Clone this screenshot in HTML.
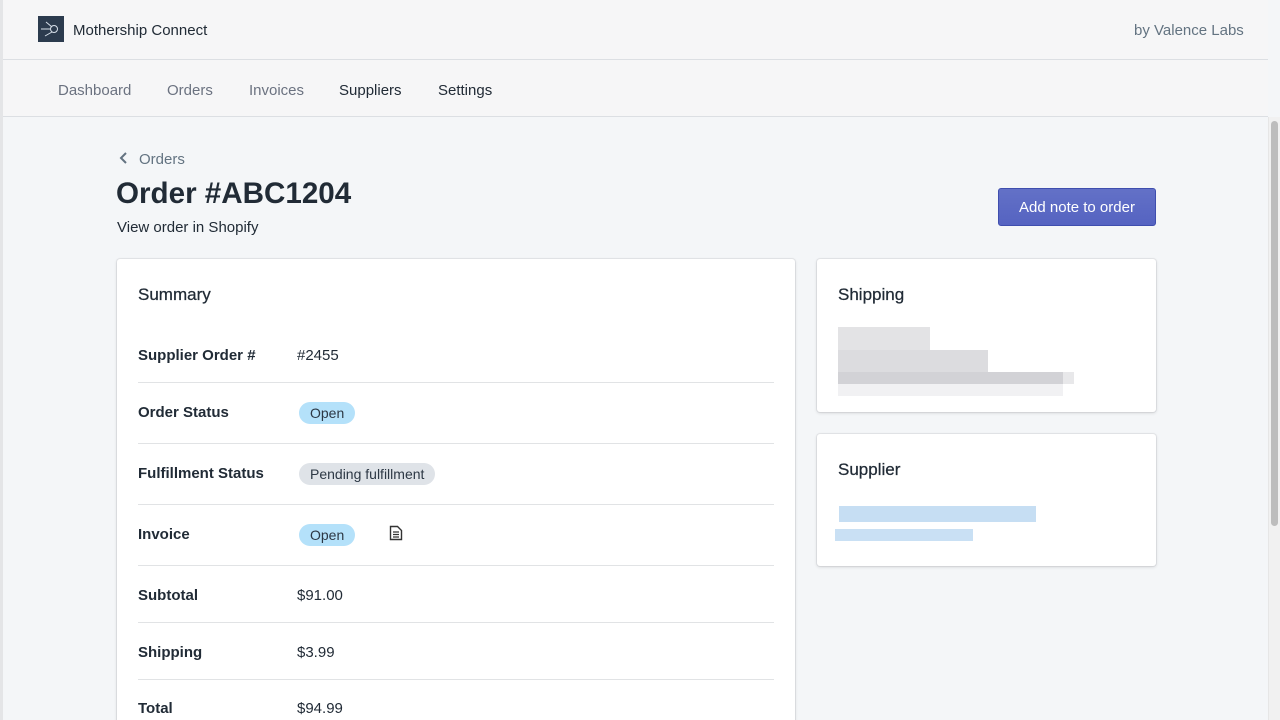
<!DOCTYPE html>
<html><head><meta charset="utf-8"><style>
*{box-sizing:border-box;margin:0;padding:0}
html{overflow:hidden;height:720px}
body{width:1280px;height:720px;overflow:hidden;background:#f4f6f8;font-family:"Liberation Sans",Arial,sans-serif;color:#212b36;position:relative}
.abs{position:absolute}
.hdr{left:3px;top:0;width:1265px;height:60px;background:#f6f6f7;border-bottom:1px solid #dcdfe3}
.nav{left:3px;top:60px;width:1265px;height:57px;background:#f6f6f7;border-bottom:1px solid #dcdfe3}
.nav span{position:absolute;top:22px;font-size:15px}
.card{background:#fff;border-radius:3px;box-shadow:0 0 0 1px rgba(63,63,68,.07),0 1px 3px rgba(63,63,68,.18)}
.lbl{position:absolute;left:21px;font-size:15px;font-weight:bold}
.ttl{position:absolute;left:21px;font-size:17px;-webkit-text-stroke:.25px #212b36}
.val{position:absolute;left:180px;font-size:15px}
.sep{position:absolute;left:21px;right:21px;height:1px;background:#e1e3e5}
.badge{position:absolute;left:182px;height:22px;border-radius:11px;padding:0 11px;font-size:14px;line-height:22px;color:#2d3845}
.px{position:absolute}
</style></head><body>
<div class="abs" style="left:0;top:0;width:3px;height:720px;background:#e4e5e7"></div>
<div class="abs hdr">
 <div class="abs" style="left:35px;top:16px;width:26px;height:26px;background:#2c3b4e">
  <svg width="26" height="26" viewBox="0 0 26 26"><g stroke="#d8e0ea" stroke-width="1" fill="none"><circle cx="16" cy="13" r="3.5"/><path d="M3 13h9M8 6l6 5M7 20l7-4"/></g></svg>
 </div>
 <div class="abs" style="left:70px;top:22px;font-size:15px;color:#212b36">Mothership Connect</div>
 <div class="abs" style="left:1131px;top:22px;font-size:15px;color:#637381">by Valence Labs</div>
</div>
<div class="abs nav">
 <span style="left:55px;color:#6b7280">Dashboard</span>
 <span style="left:164px;color:#6b7280">Orders</span>
 <span style="left:246px;color:#6b7280">Invoices</span>
 <span style="left:336px;color:#212b36">Suppliers</span>
 <span style="left:435px;color:#212b36">Settings</span>
</div>
<div class="abs" style="left:1268px;top:117px;width:12px;height:603px;background:#f1f1f1;border-left:1px solid #e6e6e6"></div>
<div class="abs" style="left:1271px;top:121px;width:7px;height:405px;background:#bdbdbd;border-radius:4px"></div>

<svg class="abs" style="left:118px;top:151px" width="12" height="14" viewBox="0 0 12 14"><path d="M8 2L3 7l5 5" stroke="#637381" stroke-width="2" fill="none"/></svg>
<div class="abs" style="left:139px;top:151px;font-size:15px;color:#637381">Orders</div>
<div class="abs" style="left:116px;top:177px;font-size:29.6px;font-weight:bold;color:#212b36">Order #ABC1204</div>
<div class="abs" style="left:117px;top:219px;font-size:15px">View order in Shopify</div>
<div class="abs" style="left:998px;top:188px;width:158px;height:38px;border:1px solid #3f4eae;border-radius:3px;color:#fff;font-size:15px;text-align:center;line-height:37px;background:linear-gradient(#6371c7,#5563c1)">Add note to order</div>

<div class="abs card" style="left:117px;top:259px;width:678px;height:470px">
 <div class="ttl" style="top:26px">Summary</div>
 <div class="lbl" style="top:88px">Supplier Order #</div><div class="val" style="top:88px">#2455</div>
 <div class="sep" style="top:123px"></div>
 <div class="lbl" style="top:145px">Order Status</div><div class="badge" style="top:143px;background:#b4e1fa">Open</div>
 <div class="sep" style="top:184px"></div>
 <div class="lbl" style="top:206px">Fulfillment Status</div><div class="badge" style="top:204px;background:#dfe3e8">Pending fulfillment</div>
 <div class="sep" style="top:245px"></div>
 <div class="lbl" style="top:267px">Invoice</div><div class="badge" style="top:265px;background:#b4e1fa">Open</div>
 <svg class="abs" style="left:272px;top:266px" width="14" height="16" viewBox="0 0 14 16"><path d="M1.5 1.5h7l4 4v9h-11z" fill="none" stroke="#333" stroke-width="1.4"/><path d="M4 7h6M4 9.5h6M4 12h6" stroke="#333" stroke-width="1.2"/></svg>
 <div class="sep" style="top:306px"></div>
 <div class="lbl" style="top:328px">Subtotal</div><div class="val" style="top:328px">$91.00</div>
 <div class="sep" style="top:363px"></div>
 <div class="lbl" style="top:385px">Shipping</div><div class="val" style="top:385px">$3.99</div>
 <div class="sep" style="top:420px"></div>
 <div class="lbl" style="top:441px">Total</div><div class="val" style="top:441px">$94.99</div>
</div>

<div class="abs card" style="left:817px;top:259px;width:339px;height:153px">
 <div class="ttl" style="top:26px">Shipping</div>
 <div class="px" style="left:21px;top:68px;width:92px;height:24px;background:#e3e3e5"></div>
 <div class="px" style="left:21px;top:91px;width:150px;height:22px;background:#dcdcdf"></div>
 <div class="px" style="left:21px;top:113px;width:236px;height:12px;background:#e8e8ea"></div>
 <div class="px" style="left:21px;top:113px;width:225px;height:12px;background:#d2d2d6"></div>
 <div class="px" style="left:21px;top:125px;width:225px;height:12px;background:#f1f1f3"></div>
</div>
<div class="abs card" style="left:817px;top:434px;width:339px;height:132px">
 <div class="ttl" style="top:26px">Supplier</div>
 <div class="px" style="left:22px;top:72px;width:197px;height:16px;background:#c6def3"></div>
 <div class="px" style="left:18px;top:95px;width:138px;height:12px;background:#c9e0f4"></div>
</div>
</body></html>
